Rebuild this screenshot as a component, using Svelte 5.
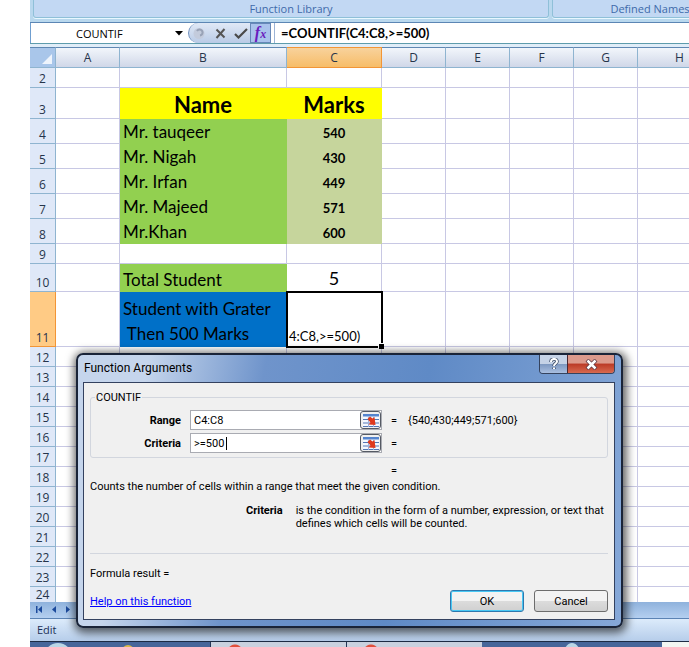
<script>
  const columns = [
    { name: "A", width: 64 },
    { name: "B", width: 167 },
    { name: "C", width: 95 },
    { name: "D", width: 64 },
    { name: "E", width: 64 },
    { name: "F", width: 64 },
    { name: "G", width: 64 },
    { name: "H", width: 84 },
  ];

  const rows = [
    { n: 2, height: 20 },
    { n: 3, height: 31, B: ["Name", "title"], C: ["Marks", "title"] },
    { n: 4, height: 25, B: ["Mr. tauqeer", "name"], C: ["540", "mark"] },
    { n: 5, height: 25, B: ["Mr. Nigah", "name"], C: ["430", "mark"] },
    { n: 6, height: 25, B: ["Mr. Irfan", "name"], C: ["449", "mark"] },
    { n: 7, height: 25, B: ["Mr. Majeed", "name"], C: ["571", "mark"] },
    { n: 8, height: 25, B: ["Mr.Khan", "name"], C: ["600", "mark"] },
    { n: 9, height: 20 },
    { n: 10, height: 28, B: ["Total Student", "name"], C: ["5", "total"] },
    { n: 11, height: 55, B: ["Student with Grater\n Then 500 Marks", "query"], C: ["4:C8,>=500)", "active"] },
  ];
  for (let n = 12; n < 24; n++) rows.push({ n, height: 20 });
  rows.push({ n: 24, height: 15 });

  let range = "C4:C8";
  let criteria = ">=500";
</script>

<div class="excel">
  <div class="ribbon">
    <div class="group library">Function Library</div>
    <div class="group names">Defined Names</div>
  </div>

  <div class="formula-bar">
    <button class="name-box">
      <span>COUNTIF</span>
      <svg width="8" height="5" viewBox="0 0 8 5"><path d="M0 0h8L4 4.5z" /></svg>
    </button>
    <div class="tools">
      <svg class="knob" width="15" height="15" viewBox="0 0 15 15">
        <circle cx="7" cy="7.5" r="5.5" fill="#c3cbdc" />
        <path d="M5 5a3 3 0 1 1 3 4.500" fill="none" stroke="#98a2b6" stroke-width="2" />
      </svg>
      <button aria-label="Cancel entry">
        <svg width="11" height="11" viewBox="0 0 11 11"><path d="M1.5 1.5l8 8M9.5 1l-8 9" fill="none" stroke="#555" stroke-width="2" /></svg>
      </button>
      <button aria-label="Enter">
        <svg width="14" height="11" viewBox="0 0 14 11"><path d="M1 6l3.500 3.500L13 1" fill="none" stroke="#4a4a4a" stroke-width="2.200" /></svg>
      </button>
    </div>
    <button class="fx" aria-label="Insert function"><i>f</i><i class="x">x</i></button>
    <input class="formula" aria-label="Formula" value="=COUNTIF(C4:C8,>=500)" />
  </div>

  <div class="sheet">
    <table>
      <colgroup>
        <col style="width: 26px" />
        {#each columns as col}
          <col style={`width: ${col.width}px`} />
        {/each}
      </colgroup>
      <thead>
        <tr>
          <th class="corner"><svg width="10" height="10" viewBox="0 0 10 10"><path d="M10 0v10H0z" fill="#eef4fc" /></svg></th>
          {#each columns as col}
            <th class:selected={col.name === "C"}>{col.name}</th>
          {/each}
        </tr>
      </thead>
      <tbody>
        {#each rows as row}
          <tr style={`height: ${row.height}px`}>
            <th class:selected={row.n === 11}>{row.n}</th>
            {#each columns as col}
              <td class={row[col.name] ? row[col.name][1] : ""}>{row[col.name] ? row[col.name][0] : ""}</td>
            {/each}
          </tr>
        {/each}
      </tbody>
    </table>
  </div>

  <div class="sheet-nav">
    <svg width="40" height="9" viewBox="0 0 40 9" fill="#1c4a9c">
      <path d="M0 1h1.500v7H0zM6 1v7L2 4.500z" />
      <path d="M20 1v7l-4-3.500z" />
      <path d="M30 1v7l4-3.500z" />
    </svg>
  </div>
  <div class="status">Edit</div>
  <div class="taskbar">
    <div class="orb"></div>
    <div class="folder"></div>
    <div class="tab"></div>
    <div class="tab"></div>
    <div class="orb small"></div>
    <div class="tray"></div>
  </div>

  <div class="dialog" role="dialog" aria-label="Function Arguments">
    <div class="title-bar">
      <span>Function Arguments</span>
      <div class="window-buttons">
        <button class="help" aria-label="Help">
          <svg width="10" height="12" viewBox="0 0 10 12" fill="none">
            <path d="M2 4c0-4 6-4 6-.5C8 5.500 5 5.500 5 8M5 9.500V11" stroke="#3d4c66" stroke-width="3.500" />
            <path d="M2 4c0-4 6-4 6-.5C8 5.500 5 5.500 5 8M5 9.500V11" stroke="#fff" stroke-width="2" />
          </svg>
        </button>
        <button class="close" aria-label="Close">
          <svg width="13" height="11" viewBox="0 0 13 11" fill="none">
            <path d="M2 1l9 9M11 1l-9 9" stroke="#5c3540" stroke-width="4" />
            <path d="M2.500 1.500l8 8M10.500 1.500l-8 8" stroke="#fff" stroke-width="2.500" />
          </svg>
        </button>
      </div>
    </div>

    <div class="body">
      <fieldset>
        <legend>COUNTIF</legend>
        {#snippet picker()}
          <button class="picker" aria-label="Select range">
            <svg width="16" height="13" viewBox="0 0 16 13">
              <path d="M0 0h16v13H0z" fill="#f4f8ff" />
              <path d="M0 0h16v2.500H0z" fill="#5585cf" />
              <path d="M0 5.500h16M0 9h16M0 12.500h16" stroke="#5577b5" />
              <path d="M5.500 3v10M10.500 3v10" stroke="#9db3dc" />
              <path d="M4.500 5l2.500-2.500 2.500 2 2-1.500 1 8-7-.5 2-2z" fill="#e0391c" />
            </svg>
          </button>
        {/snippet}
        <div class="field">
          <label for="range">Range</label>
          <div class="entry"><input id="range" bind:value={range} />{@render picker()}</div>
          <span class="equals">=</span>
          <span>{"{540;430;449;571;600}"}</span>
        </div>
        <div class="field">
          <label for="criteria">Criteria</label>
          <div class="entry">
            <div class="typed"><input id="criteria" bind:value={criteria} /><span class="caret"></span></div>
            {@render picker()}
          </div>
          <span class="equals">=</span>
        </div>
      </fieldset>

      <div class="result">=</div>
      <p class="about">Counts the number of cells within a range that meet the given condition.</p>
      <div class="argument">
        <b>Criteria</b>
        <p>is the condition in the form of a number, expression, or text that defines which cells will be counted.</p>
      </div>
      <p class="formula-result">Formula result =</p>
      <div class="footer">
        <a href="#help">Help on this function</a>
        <button class="ok">OK</button>
        <button>Cancel</button>
      </div>
    </div>
  </div>
</div>

<style>
  :global(body) {
    margin: 0;
    background: #fff;
    overflow: hidden;
  }

  .excel {
    position: relative;
    margin-left: 30px;
    overflow: hidden;
    font: 11px "Open Sans", sans-serif;
    color: #000;
  }

  button,
  input {
    box-sizing: border-box;
    margin: 0;
    padding: 0;
    font: inherit;
    color: inherit;
    border: 0;
    background: none;
    outline: 0;
  }

  p {
    margin: 0;
  }

  /* ribbon and formula bar */
  .ribbon {
    display: flex;
    gap: 3px;
    box-sizing: border-box;
    height: 23px;
    padding: 0 0 4px 3px;
    background: #b9d8ee;
    border-bottom: 1px solid #5c86b4;
  }

  .group {
    box-sizing: border-box;
    flex: none;
    height: 18px;
    line-height: 18px;
    text-align: center;
    color: #3e6aaa;
    background: #c2d8f3;
    border: 1px solid #8fc0d8;
    border-top: 0;
    border-radius: 0 0 3px 3px;
    box-shadow: 0 1px #e8f8ff;
  }

  .library {
    width: 516px;
  }

  .names {
    width: 196px;
  }

  .formula-bar {
    display: flex;
    align-items: center;
    height: 20px;
    background: #fff;
    border-bottom: 1px solid #5e9cac;
    box-shadow: inset 1px 0 #6f9ed0;
  }

  .name-box {
    display: flex;
    align-items: center;
    justify-content: space-between;
    width: 158px;
    padding: 0 5px 0 46px;
  }

  .tools {
    display: flex;
    align-items: center;
    gap: 8px;
    box-sizing: border-box;
    width: 62px;
    height: 20px;
    padding-left: 3px;
    background: linear-gradient(#e0e9f6, #b9cbe6);
    border-left: 1px solid #6f8fbd;
    border-radius: 10px 0 0 10px;
  }

  .tools svg {
    display: block;
  }

  .fx {
    width: 21px;
    height: 20px;
    font: bold 16px/16px "Liberation Serif", serif;
    color: #6a1bbd;
    background: #a9c3ec;
    border: 1px solid #6788b8;
  }

  .fx .x {
    font-size: 12px;
  }

  .formula {
    flex: 1;
    min-width: 0;
    height: 20px;
    margin-left: 3px;
    padding-left: 6px;
    font: bold 13px Lato, sans-serif;
    border-left: 1px solid #9db4d6;
  }

  /* grid */
  .sheet {
    overflow: hidden;
    padding-top: 3px;
    background: #e0edf8;
  }

  table {
    width: 692px;
    table-layout: fixed;
    border-collapse: separate;
    border-spacing: 0;
    background: #fff;
    font: 13px/19px Lato, sans-serif;
  }

  th,
  td {
    box-sizing: border-box;
    padding: 0;
    border-right: 1px solid #c8c8e4;
    border-bottom: 1px solid #c8c8e4;
    vertical-align: bottom;
    white-space: pre;
  }

  th {
    font: 12px/17px "Open Sans", sans-serif;
    color: #26344a;
    background: #dfe8f8;
    border-color: #8fb4d0;
  }

  tbody tr:last-child > * {
    height: 15px;
    line-height: 14px;
    border-bottom: 0;
  }

  thead th {
    height: 21px;
    background: linear-gradient(#f2f6fb, #d0d7e8);
    border-top: 1px solid #5f87b2;
    vertical-align: middle;
  }

  thead .corner {
    background: #a9c6ea;
    text-align: right;
    vertical-align: bottom;
  }

  .corner svg {
    display: block;
    margin: 0 3px 3px auto;
  }

  th.selected {
    background: #ffcb85;
    border-color: #f29536;
  }

  thead th.selected {
    background: linear-gradient(#f8d29c, #f7bd68);
  }

  .title {
    font: bold 22px/26px Lato, sans-serif;
    text-align: center;
    background: #ff0;
    border-color: #ff0;
  }

  .name,
  .query {
    padding-left: 3px;
    font-size: 17px;
    line-height: 22px;
    background: #92d050;
    border-color: #92d050;
  }

  .query {
    line-height: 25px;
    background: #0070c8;
    border-color: #0070c8;
  }

  .mark {
    font-weight: bold;
    text-align: center;
    background: #c6d59c;
    border-color: #c6d59c;
  }

  .total {
    font-size: 18px;
    line-height: 26px;
    text-align: center;
  }

  .active {
    position: relative;
    padding-left: 1px;
    outline: 2px solid #000;
    outline-offset: -1px;
    border-left: 1px solid #f29536;
  }

  .active::after {
    content: "";
    position: absolute;
    right: -3px;
    bottom: -3px;
    width: 5px;
    height: 5px;
    background: #000;
    border: solid #fff;
    border-width: 1px 0 0 1px;
  }

  /* bottom strips */
  .sheet-nav {
    box-sizing: border-box;
    height: 17px;
    padding: 3px 0 0 6px;
    background: linear-gradient(#8fb2dc, #b4cff0);
    border-bottom: 1px solid #5b83b4;
  }

  .sheet-nav svg {
    display: block;
  }

  .status {
    height: 22px;
    padding-left: 7px;
    line-height: 21px;
    color: #1c2f55;
    background: linear-gradient(#dcebfb, #b6cdea);
  }

  .taskbar {
    display: flex;
    box-sizing: border-box;
    height: 6px;
    overflow: hidden;
    background: #47669a;
    border-top: 1px solid #1d2c44;
  }

  .orb {
    width: 28px;
    height: 28px;
    margin: 1px 50px 0 14px;
    background: #b9d6e6;
    border-radius: 50%;
  }

  .folder {
    width: 12px;
    height: 12px;
    margin: 3px 76px 0 0;
    background: #d9b84a;
    border-radius: 50%;
  }

  .tab {
    box-sizing: border-box;
    width: 136px;
    background: radial-gradient(circle at 24px 10px, #e2503c 7px, #c9d1df 8px);
    border-left: 1px solid #223556;
  }

  .small {
    width: 18px;
    margin: 1px 81px 0;
  }

  .tray {
    flex: 1;
    background: #f2f6f2;
  }

  /* dialog */
  .dialog {
    position: absolute;
    top: 353px;
    left: 46px;
    box-sizing: border-box;
    width: 547px;
    padding: 0 6px 6px 5px;
    font: 11px Roboto, sans-serif;
    background: linear-gradient(100deg, #c5d5ec 12%, #6f94cb 32%, #5f8ac6 60%, #86a8d8);
    border: 2px solid #1a2438;
    border-radius: 7px;
    box-shadow: 1px 2px 9px 3px rgba(0, 0, 0, 0.6);
  }

  .title-bar {
    display: flex;
    justify-content: space-between;
    height: 27px;
    padding-left: 1px;
    font: 12px/26px Roboto, sans-serif;
  }

  .window-buttons {
    display: flex;
    height: 18px;
    border: 1px solid #35435e;
    border-top: 0;
    border-radius: 0 0 4px 4px;
    overflow: hidden;
  }

  .window-buttons button {
    display: flex;
    align-items: center;
    justify-content: center;
  }

  .help {
    width: 27px;
    background: linear-gradient(#c5d2e6 50%, #7d97c0 50%, #a9bfe0);
  }

  .window-buttons .close {
    width: 47px;
    background: linear-gradient(#dc9a8c 45%, #bb3a26 50%, #d86a50);
    border-left: 1px solid #4a2630;
  }

  .body {
    box-sizing: border-box;
    height: 238px;
    padding: 7px 6px 0;
    background: #f0f0f0;
    border: 1px solid #33415f;
  }

  fieldset {
    box-sizing: border-box;
    height: 68px;
    min-width: 0;
    margin: 0;
    padding: 5px 0 0;
    border: 1px solid #d2d6de;
    border-radius: 3px;
  }

  legend {
    margin-left: 4px;
    padding: 0 1px;
    line-height: 15px;
  }

  .field {
    display: flex;
    align-items: center;
    height: 20px;
    margin-bottom: 3px;
  }

  .field label {
    width: 90px;
    margin-right: 9px;
    text-align: right;
    font-weight: bold;
  }

  .entry {
    display: flex;
    box-sizing: border-box;
    width: 192px;
    height: 20px;
    background: #fff;
    border: 1px solid #a9abb2;
  }

  .entry input {
    flex: 1;
    min-width: 0;
    padding-left: 3px;
  }

  .typed {
    display: flex;
    position: relative;
    flex: 1;
  }

  .caret {
    position: absolute;
    top: 3px;
    left: 35px;
    width: 1px;
    height: 13px;
    background: #000;
  }

  .picker {
    display: flex;
    align-items: center;
    justify-content: center;
    width: 21px;
    height: 18px;
    background: #f0f0f0;
    border: 1px solid #555a64;
    border-radius: 3px;
  }

  .equals {
    width: 17px;
    padding-left: 9px;
  }

  .result {
    padding: 5px 0 0 301px;
    line-height: 15px;
  }

  .about {
    line-height: 17px;
  }

  .argument {
    display: flex;
    gap: 13px;
    box-sizing: border-box;
    height: 59px;
    padding: 9px 0 0 156px;
    line-height: 13px;
    border-bottom: 1px solid #d2d6de;
  }

  .argument p {
    flex: 1;
  }

  .formula-result {
    padding-top: 12px;
    line-height: 15px;
  }

  .footer {
    display: flex;
    align-items: center;
    gap: 10px;
    margin-top: 9px;
  }

  .footer a {
    margin-right: auto;
    color: #00f;
  }

  .footer button {
    width: 74px;
    height: 22px;
    background: linear-gradient(#f3f3f3 50%, #dcdcdc 50%, #d0d0d0);
    border: 1px solid #6d6d6d;
    border-radius: 3px;
  }

  .footer .ok {
    border-color: #2f78ae;
    box-shadow: inset 0 0 0 1px #48c8f4;
  }
</style>
